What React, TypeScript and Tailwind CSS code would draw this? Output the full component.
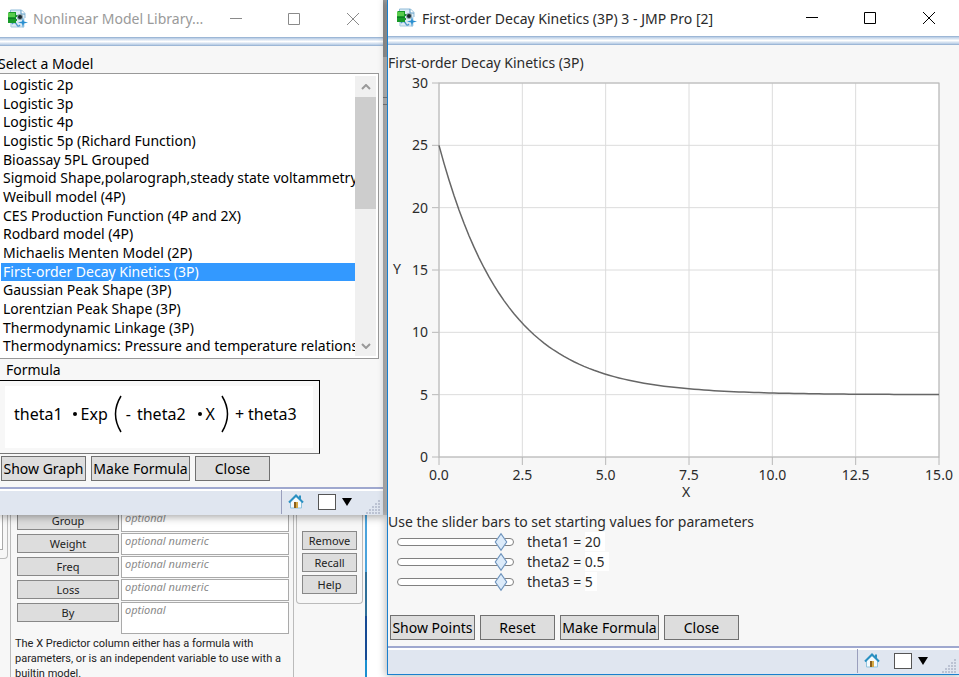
import { useState } from "react";

const models = [
  "Logistic 2p",
  "Logistic 3p",
  "Logistic 4p",
  "Logistic 5p (Richard Function)",
  "Bioassay 5PL Grouped",
  "Sigmoid Shape,polarograph,steady state voltammetry",
  "Weibull model (4P)",
  "CES Production Function (4P and 2X)",
  "Rodbard model (4P)",
  "Michaelis Menten Model (2P)",
  "First-order Decay Kinetics (3P)",
  "Gaussian Peak Shape (3P)",
  "Lorentzian Peak Shape (3P)",
  "Thermodynamic Linkage (3P)",
  "Thermodynamics: Pressure and temperature relationship",
];

const params = [
  { name: "theta1", value: "20" },
  { name: "theta2", value: "0.5" },
  { name: "theta3", value: "5" },
];

const roles = [
  { name: "Group", hint: "optional" },
  { name: "Weight", hint: "optional numeric" },
  { name: "Freq", hint: "optional numeric" },
  { name: "Loss", hint: "optional numeric" },
  { name: "By", hint: "optional" },
];

function AppIcon() {
  return (
    <svg width="20" height="20" viewBox="0 0 20 20" className="shrink-0">
      <path d="M2.500 1h11l3.500 3.500V18H2.500z" fill="#dceaf4" />
      <path d="M2.500 3V1h11L17 4.500V9" fill="none" stroke="#8fbbd8" />
      <path d="M13 1v4h4" fill="#fff" stroke="#5b9bc6" />
      <path d="M3 14v4h13" fill="none" stroke="#a9cadf" />
      <path d="M4 15c2-3 4-1 5 1s2 1 3 0" fill="none" stroke="#4f97c8" strokeWidth="1.4" />
      <path d="M0 4l1-1h7v3h2v2H8v2h1v2H8v2H0z" fill="#189a2a" />
      <path d="M0 4h7v4H0z" fill="#58cc4c" />
      <path d="M0 9h8v1H0z" fill="#0c7f22" />
      <circle cx="12" cy="8" r="3" fill="#8aa0ab" />
      <circle cx="12" cy="8" r="2" fill="#1d2a30" />
      <path d="M15 8.500l1 4 4 1-4 1-1 4.500-1-4.500-4-1 4-1z" fill="#2b8fd0" />
    </svg>
  );
}

function HomeIcon() {
  return (
    <svg width="16" height="15" viewBox="0 0 16 15">
      <path d="M2.500 7.500L8 2.500l5.500 5v6.500h-11z" fill="#f4fafd" stroke="#8fc3dd" />
      <path d="M11 1.500h2v4l-2-2z" fill="#2d8fc0" />
      <path d="M1 8.500L8 1.500l7 7" fill="none" stroke="#2a90c2" strokeWidth="2" />
      <path d="M6 8h4v6H6z" fill="#8a5f1d" />
      <path d="M8 8h2v6H8z" fill="#d6aa45" />
    </svg>
  );
}

function TitleBar({ title, active }: { title: string; active?: boolean }) {
  return (
    <>
      <header
        className={
          "flex items-center bg-white " +
          (active ? "h-9 pl-[9px] text-[#2a2a2a]" : "h-[37px] pl-2 text-[#9a9a9a]")
        }
      >
        <AppIcon />
        <h1 className="ml-[5px] flex-1 truncate text-[14px]">{title}</h1>
        <div className={"flex " + (active ? "text-black" : "text-[#8a8a8a]")}>
          <button aria-label="Minimize" className="flex h-8 w-[58px] items-center justify-center">
            <svg width="12" height="12" fill="none" stroke="currentColor"><path d="M0 5.500h12" /></svg>
          </button>
          <button aria-label="Maximize" className="flex h-8 w-[58px] items-center justify-center">
            <svg width="12" height="12" fill="none" stroke="currentColor"><path d="M.5.500h11v11H.5z" /></svg>
          </button>
          <button aria-label="Close window" className="flex h-8 w-[60px] items-center justify-center">
            <svg width="12" height="12" fill="none" stroke="currentColor"><path d="M0 0l12 12M12 0L0 12" /></svg>
          </button>
        </div>
      </header>
      <div className="h-[9px] border-y border-[#9db7d6] bg-linear-to-b from-[#b4cae4] via-white to-[#b4cae4]" />
    </>
  );
}

function StatusBar() {
  return (
    <footer className="flex h-7 items-center justify-end border-t-2 border-[#9fa8cf] bg-[#e0e6f0] pb-px inset-shadow-[0_2px_0_#fff]">
      <div className="h-6 w-px bg-[#9a9fbd]" />
      <button aria-label="Home window" className="ml-1.5">
        <HomeIcon />
      </button>
      <input type="checkbox" aria-label="Keep window" className="ml-3.5 h-4 w-[18px] appearance-none border border-[#555] bg-white" />
      <button aria-label="Window list" className="ml-1.5">
        <svg width="10" height="8"><path d="M0 0h10L5 8z" fill="#000" /></svg>
      </button>
      <svg width="14" height="14" viewBox="0 0 14 14" className="mt-2.5 mr-[3px] ml-3.5" fill="#bcc3d3">
        <path d="M12 0h2v2h-2zM9 3h2v2H9zM12 3h2v2h-2zM6 6h2v2H6zM9 6h2v2H9zM12 6h2v2h-2zM3 9h2v2H3zM6 9h2v2H6zM9 9h2v2H9zM12 9h2v2h-2zM0 12h2v2H0zM3 12h2v2H3zM6 12h2v2H6zM9 12h2v2H9zM12 12h2v2h-2z" />
      </svg>
    </footer>
  );
}

function PushButton({ label, width }: { label: string; width: string }) {
  return (
    <button className={"h-[25px] border border-[#707070] bg-[#dddddd] text-[14px] leading-[22px] whitespace-nowrap text-black " + width}>
      {label}
    </button>
  );
}

function DecayChart() {
  const left = 51;
  const top = 9;
  const w = 500;
  const h = 374;
  const px = (x: number) => left + (x / 15) * w;
  const py = (y: number) => top + h - (y / 30) * h;

  const points = Array.from({ length: 101 }, (_, i) => {
    const x = (i * 15) / 100;
    return px(x) + "," + py(5 + 20 * Math.exp(-0.5 * x));
  }).join(" ");

  return (
    <svg viewBox="0 0 571 430" className="block w-full" fontSize="14" fill="#2b2b2b">
      <rect x={left} y={top} width={w} height={h} fill="#fff" />
      {[0, 5, 10, 15, 20, 25, 30].map((y) => (
        <g key={y}>
          <path d={`M${left} ${py(y)}h${w}`} stroke="#dcdcdc" />
          <path d={`M${left - 7} ${py(y)}h7`} stroke="#b8b8b8" />
          <text x={left - 11} y={py(y) + 5} textAnchor="end">{y}</text>
        </g>
      ))}
      {[0, 2.5, 5, 7.5, 10, 12.5, 15].map((x) => (
        <g key={x}>
          <path d={`M${px(x)} ${top}v${h}`} stroke="#dcdcdc" />
          <path d={`M${px(x)} ${top + h}v8`} stroke="#b8b8b8" />
          <text x={px(x)} y={top + h + 23} textAnchor="middle">{x.toFixed(1)}</text>
        </g>
      ))}
      <rect x={left} y={top} width={w} height={h} fill="none" stroke="#b4b4b4" />
      <polyline points={points} fill="none" stroke="#666" strokeWidth="1.5" />
      <text x="5" y="200">Y</text>
      <text x="298" y="423" textAnchor="middle">X</text>
    </svg>
  );
}

function ModelLibrary() {
  const [selected, setSelected] = useState(10);

  return (
    <section className="absolute top-0 left-0 w-[383px] bg-[#f7f7f7] text-[14px] text-black shadow-[0_0_8px_2px_rgba(0,0,0,0.35)]">
      <TitleBar title="Nonlinear Model Library..." />
      <h2 className="mt-2 -ml-0.5 h-[19px] leading-5">Select a Model</h2>
      <div className="mr-1 flex h-[286px] border border-l-0 border-[#999] bg-white pt-0.5 pb-0.5">
        <ul role="listbox" aria-label="Select a Model" className="ml-px flex min-w-0 flex-1 flex-col">
          {models.map((m, i) => (
            <li
              key={m}
              role="option"
              aria-selected={i === selected}
              onClick={() => setSelected(i)}
              className={
                "flex-1 overflow-hidden pl-0.5 leading-[17px] whitespace-nowrap " +
                (i === selected ? "bg-[#3399ff] text-white" : "")
              }
            >
              {m}
            </li>
          ))}
        </ul>
        {/* scrollbar */}
        <div className="mr-0.5 flex w-[21px] flex-col bg-[#f0f0f0]">
          <button aria-label="Scroll up" className="flex h-[21px] items-center justify-center">
            <svg width="10" height="6" fill="none" stroke="#999" strokeWidth="2"><path d="M1 5l4-4 4 4" /></svg>
          </button>
          <div className="h-28 bg-[#cdcdcd]" />
          <button aria-label="Scroll down" className="mt-auto flex h-[21px] items-center justify-center">
            <svg width="10" height="6" fill="none" stroke="#999" strokeWidth="2"><path d="M1 1l4 4 4-4" /></svg>
          </button>
        </div>
      </div>
      <h2 className="h-[21px] pl-1.5 leading-[22px]">Formula</h2>
      <div className="h-[74px] w-80 border border-l-0 border-black border-b-[#777] bg-[#f7f7f7] py-[5px] pr-1.5 pl-[5px]">
        <div className="flex h-full items-center bg-white pb-1.5 pl-[9px] text-[16px] whitespace-nowrap">
          <span>theta1</span>
          <span className="ml-2.5 size-1 rounded-full bg-black" />
          <span className="ml-1">Exp</span>
          <svg width="8" height="38" className="ml-1.5" fill="none" stroke="#000" strokeWidth="1.5"><path d="M7 1Q-4 19 7 37" /></svg>
          <span className="ml-1">-</span>
          <span className="ml-1.5">theta2</span>
          <span className="ml-3 size-1 rounded-full bg-black" />
          <span className="ml-1">X</span>
          <svg width="8" height="38" className="ml-1.5" fill="none" stroke="#000" strokeWidth="1.5"><path d="M1 1Q12 19 1 37" /></svg>
          <span className="ml-1.5">+</span>
          <span className="ml-1">theta3</span>
        </div>
      </div>
      <div className="flex gap-[5px] pt-0.5 pb-1.5 pl-px">
        <PushButton label="Show Graph" width="w-[85px]" />
        <PushButton label="Make Formula" width="w-[99px]" />
        <PushButton label="Close" width="w-[75px]" />
      </div>
      <StatusBar />
    </section>
  );
}

function GraphWindow() {
  return (
    <section className="absolute top-0 right-0 left-[387px] border-b border-l border-[#1a80cf] bg-[#f7f7f7] text-[14px] text-[#2b2b2b] shadow-[0_0_8px_1px_rgba(0,0,0,0.3)]">
      <TitleBar title="First-order Decay Kinetics (3P) 3 - JMP Pro [2]" active />
      <h2 className="mt-2 h-[21px] leading-[19px]">First-order Decay Kinetics (3P)</h2>
      <DecayChart />
      <p className="mt-2 h-5 leading-5">Use the slider bars to set starting values for parameters</p>
      {params.map((p) => (
        <div key={p.name} className="flex h-5 items-center pl-[9px]">
          <input
            id={p.name}
            type="range"
            defaultValue={93}
            className="h-2 w-[117px] appearance-none rounded-[4px] border border-[#808080] bg-white [&::-webkit-slider-thumb]:size-2.5 [&::-webkit-slider-thumb]:appearance-none [&::-webkit-slider-thumb]:border [&::-webkit-slider-thumb]:border-[#6f93bb] [&::-webkit-slider-thumb]:bg-[#dcebfa] [&::-webkit-slider-thumb]:[transform:scale(0.9,1.3)_rotate(45deg)]"
          />
          <label htmlFor={p.name} className="ml-[13px] leading-[18px] whitespace-pre">
            {p.name} = <span className="bg-white pr-1">{p.value}</span>
          </label>
        </div>
      ))}
      <div className="mt-[23px] flex gap-[5px] pb-1.5 pl-0.5">
        <PushButton label="Show Points" width="w-[85px]" />
        <PushButton label="Reset" width="w-[75px]" />
        <PushButton label="Make Formula" width="w-[99px]" />
        <PushButton label="Close" width="w-[75px]" />
      </div>
      <StatusBar />
    </section>
  );
}

function LaunchDialog() {
  return (
    <section className="absolute top-[504px] bottom-0 left-0 flex w-[367px] bg-[#f7f7f7] text-[11px] text-[#222]">
      <div className="h-[55px] w-2 rounded-br border-r border-b border-[#bbb] pb-2">
        <div className="h-full w-[3px] border-r border-b border-[#aaa] bg-white" />
      </div>
      <div className="ml-0.5 w-[284px] border-x border-[#bbb] pt-1.5 pl-1.5">
        <div className="grid grid-cols-[102px_168px] gap-x-0.5">
          {roles.map((r) => (
            <div key={r.name} className="contents">
              <button className="mt-px h-[19px] border border-[#888] bg-[#dddddd] leading-4">{r.name}</button>
              <div className={"border border-[#aaa] bg-white pl-[3px] text-[#8a8a8a] italic leading-[14px] " + (r.name === "By" ? "h-8" : "mb-px h-[22px]")}>
                {r.hint}
              </div>
            </div>
          ))}
        </div>
        <p className="mt-0.5 -ml-0.5 font-['Roboto',sans-serif] leading-[15px]">
          The X Predictor column either has a formula with parameters, or is an independent variable to use with a builtin model.
        </p>
      </div>
      <div className="ml-0.5 flex h-[100px] flex-1 flex-col gap-[3px] rounded-b border-x border-b border-[#bbb] px-[5px] pt-[27px]">
        {["Remove", "Recall", "Help"].map((b) => (
          <button key={b} className="h-[19px] border border-[#888] bg-[#dddddd] leading-4">{b}</button>
        ))}
      </div>
      <div className="ml-0.5 flex w-0.5 flex-col">
        <div className="h-[68px] bg-[#4aa3dc]" />
        <div className="h-11 bg-[#2f6f98]" />
        <div className="h-11 bg-[#164a94]" />
        <div className="flex-1 bg-[#1a90d0]" />
      </div>
    </section>
  );
}

export default function App() {
  return (
    <main className="relative h-screen w-full overflow-hidden bg-white font-['Noto_Sans','Open_Sans',sans-serif]">
      <LaunchDialog />
      {/* window behind, seen in the gap between the two front ones */}
      <div className="absolute top-0 left-[383px] flex h-[515px] w-1 flex-col bg-[#e0e0e0]">
        <div className="h-[57px] bg-[#b8b8b8]" />
        <div className="mt-[40px] h-2 border-y border-[#999]" />
      </div>
      <ModelLibrary />
      <GraphWindow />
    </main>
  );
}
